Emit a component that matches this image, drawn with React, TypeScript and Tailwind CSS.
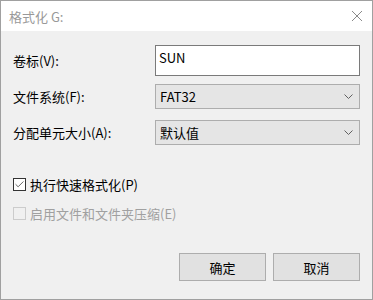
import { Check } from 'lucide-react';

const font = { fontFamily: '"Noto Sans CJK SC", "Liberation Sans", sans-serif' };

function Chevron() {
    return (
        <svg width="9" height="5" viewBox="0 0 9 5" className="text-[#606060]">
            <path d="M0.5 0.5 L4.5 4.5 L8.5 0.5" fill="none" stroke="currentColor" strokeWidth="1" />
        </svg>
    );
}

function SelectBox({ value }: { value: string }) {
    return (
        <div className="flex h-[25px] w-[205px] items-center justify-between border border-[#adadad] bg-[#e5e5e5] pl-[4px] pr-[6px]">
            <span className="text-[13px] text-black">{value}</span>
            <Chevron />
        </div>
    );
}

export default function App() {
    return (
        <div
            className="flex h-[300px] w-[373px] flex-col border border-[#a0a0a0] bg-[#f0f0f0] text-[12px] leading-none"
            style={font}
        >
            {/* title bar */}
            <div className="flex h-[30px] items-center justify-between bg-white pl-[8px] pr-[9px]">
                <span className="text-[13px] text-[#999999]">格式化 G:</span>
                <svg width="12" height="12" viewBox="0 0 12 12">
                    <path d="M1 1 L11 11 M11 1 L1 11" stroke="#8a8a8a" strokeWidth="1" />
                </svg>
            </div>

            <div className="flex flex-col pl-[12px] pr-[12px]">
                <div className="mt-[14px] flex items-center">
                    <span className="w-[142px] text-[13px] text-black">卷标(V):</span>
                    <div className="flex h-[31px] w-[205px] items-center border border-[#7a7a7a] bg-white pl-[3px]">
                        <span className="-mt-[6px] text-[13px] text-black">SUN</span>
                    </div>
                </div>

                <div className="mt-[8px] flex items-center">
                    <span className="w-[142px] text-[13px] text-black">文件系统(F):</span>
                    <SelectBox value="FAT32" />
                </div>

                <div className="mt-[11px] flex items-center">
                    <span className="w-[142px] text-[13px] text-black">分配单元大小(A):</span>
                    <SelectBox value="默认值" />
                </div>

                <div className="mt-[33px] flex h-[13px] items-center gap-[4px]">
                    <div className="flex h-[13px] w-[13px] items-center justify-center border border-[#333333] bg-white">
                        <Check size={11} strokeWidth={1.5} className="text-[#222222]" />
                    </div>
                    <span className="text-[13px] text-black">执行快速格式化(P)</span>
                </div>

                <div className="mt-[16px] flex h-[13px] items-center gap-[4px]">
                    <div className="h-[13px] w-[13px] border border-[#cccccc] bg-[#f0f0f0]" />
                    <span className="text-[13px] text-[#a0a0a0]">启用文件和文件夹压缩(E)</span>
                </div>

                <div className="mt-[33px] flex justify-end gap-[7px]">
                    <button className="flex h-[28px] w-[87px] items-center justify-center border border-[#adadad] bg-[#e1e1e1] text-[13px] text-black">
                        确定
                    </button>
                    <button className="flex h-[28px] w-[87px] items-center justify-center border border-[#adadad] bg-[#e1e1e1] text-[13px] text-black">
                        取消
                    </button>
                </div>
            </div>
        </div>
    );
}
